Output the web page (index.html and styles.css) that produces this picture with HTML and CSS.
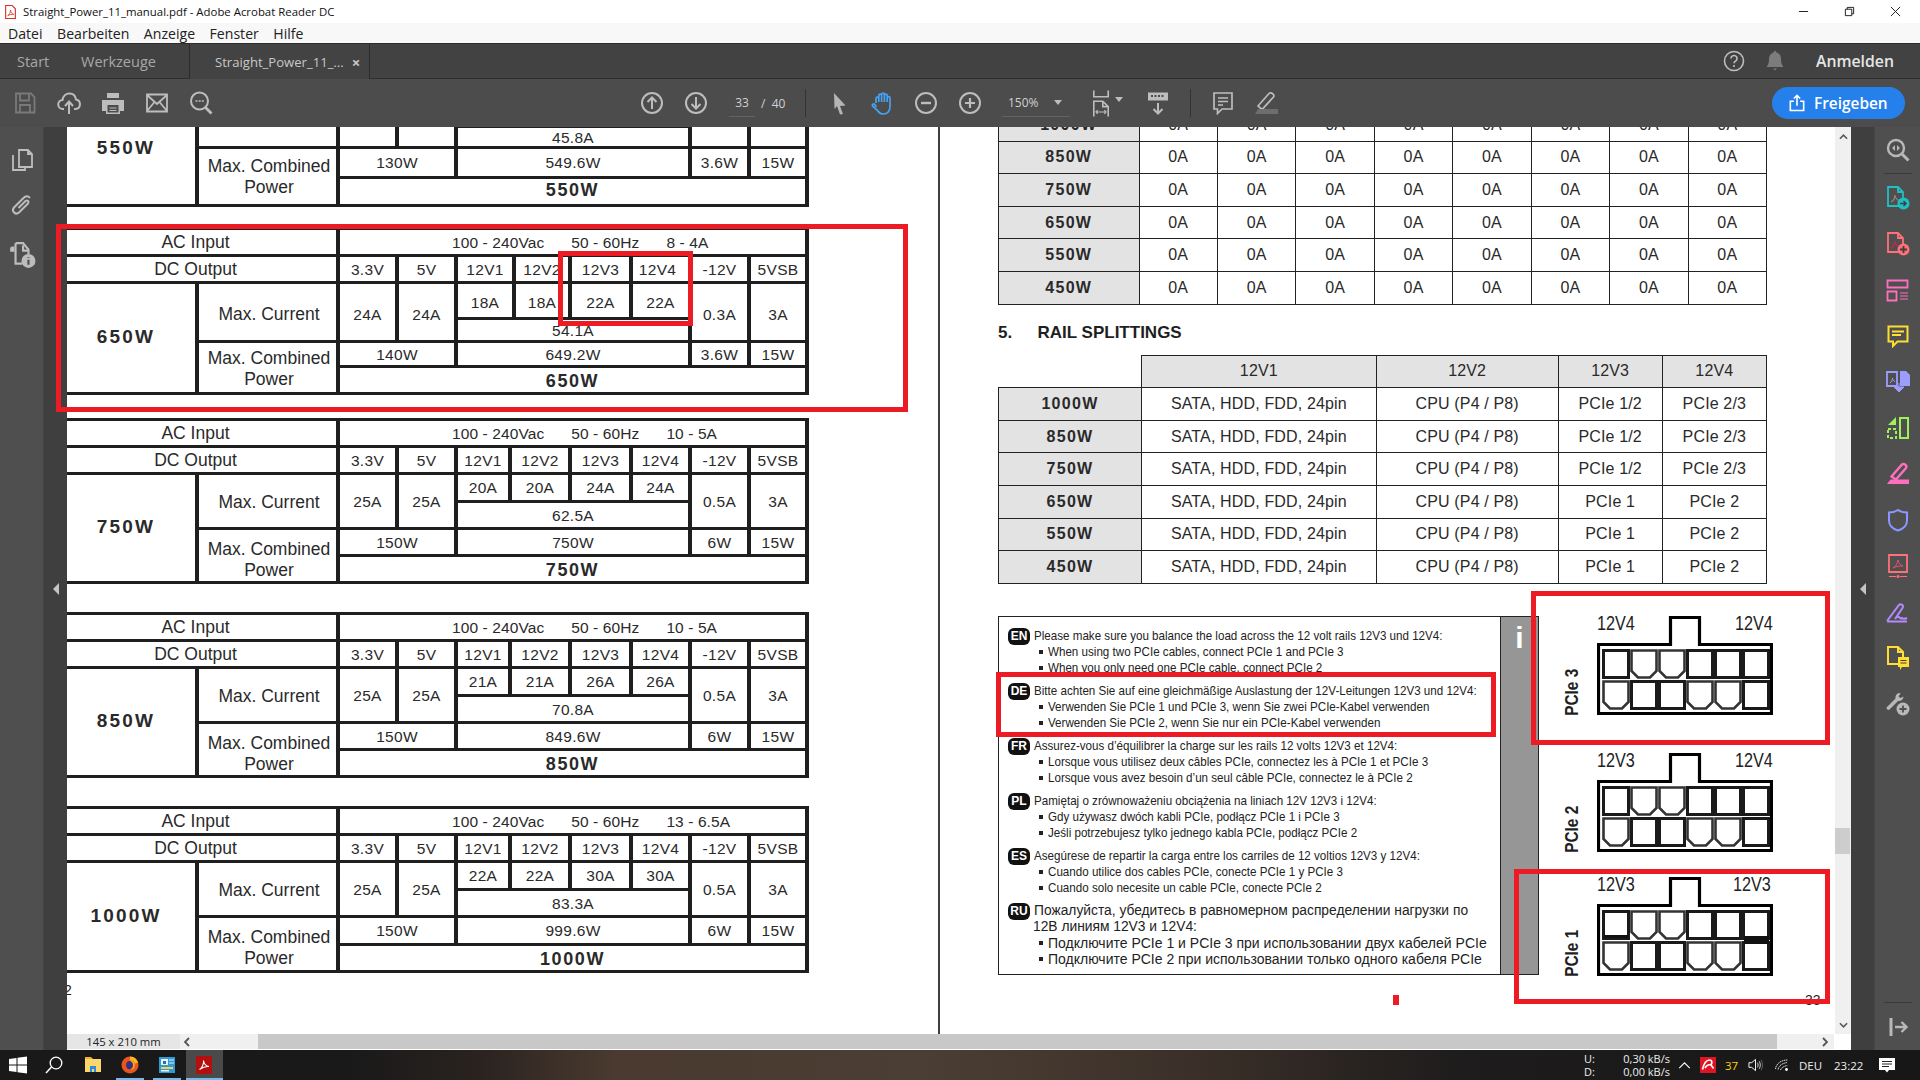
FILE: index.html
```html
<!DOCTYPE html>
<html lang="de">
<head>
<meta charset="utf-8">
<title>Straight_Power_11_manual.pdf - Adobe Acrobat Reader DC</title>
<link rel="stylesheet" href="styles.css">
</head>
<body>
<svg class="defs" width="0" height="0">
  <symbol id="cell-sq" viewBox="0 0 28 30"><rect x="1.5" y="1.5" width="25" height="27" fill="#fff" stroke="#1a1a1a" stroke-width="3"/></symbol>
  <symbol id="cell-ch" viewBox="0 0 28 30"><path d="M1.5 1.5H26.5V22L20 28.5H8L1.5 22Z" fill="#fff" stroke="#333" stroke-width="2.6"/></symbol>
  <symbol id="connector" viewBox="0 0 176 99">
    <path d="M1.5 28.5H73.5V1.5H102.5V28.5H174.5V97.5H1.5Z" fill="#fff" stroke="#000" stroke-width="3.2"/>
    <use href="#cell-sq" x="5" y="33" width="28" height="30"/><use href="#cell-ch" x="33" y="33" width="28" height="30"/><use href="#cell-ch" x="61" y="33" width="28" height="30"/><use href="#cell-sq" x="89" y="33" width="28" height="30"/><use href="#cell-sq" x="117" y="33" width="28" height="30"/><use href="#cell-sq" x="145" y="33" width="28" height="30"/>
    <use href="#cell-ch" x="5" y="64" width="28" height="30"/><use href="#cell-sq" x="33" y="64" width="28" height="30"/><use href="#cell-sq" x="61" y="64" width="28" height="30"/><use href="#cell-ch" x="89" y="64" width="28" height="30"/><use href="#cell-ch" x="117" y="64" width="28" height="30"/><use href="#cell-sq" x="145" y="64" width="28" height="30"/>
  </symbol>
</svg>

<header class="titlebar">
  <svg class="title-icon" viewBox="0 0 16 18"><path d="M2 1h8l4 4v12H2Z" fill="#fff" stroke="#d9342b" stroke-width="1.4"/><path d="M4.5 13.5c2-1 3.500-4 3.500-7 .5 3 2 5 4 5.500-2.500-.3-5.500.3-7.500 1.500Z" fill="none" stroke="#d9342b"/></svg>
  <span class="title-text">Straight_Power_11_manual.pdf - Adobe Acrobat Reader DC</span>
  <div class="win-btns">
    <span class="win-btn"><svg viewBox="0 0 12 12"><path d="M1 6h10" stroke="#111" fill="none"/></svg></span>
    <span class="win-btn"><svg viewBox="0 0 12 12"><path d="M1.500 3.500h7v7h-7ZM3.500 3.500v-2h7v7h-2" stroke="#111" fill="none"/></svg></span>
    <span class="win-btn"><svg viewBox="0 0 12 12"><path d="M1 1l10 10M11 1L1 11" stroke="#111" fill="none"/></svg></span>
  </div>
</header>

<nav class="menubar"><span>Datei</span><span>Bearbeiten</span><span>Anzeige</span><span>Fenster</span><span>Hilfe</span></nav>

<div class="tabbar">
  <span class="tab tab-start">Start</span>
  <span class="tab tab-tools">Werkzeuge</span>
  <div class="tab-active"><span>Straight_Power_11_...</span><b class="tab-close">×</b></div>
  <div class="tab-right">
    <svg class="ic22" viewBox="0 0 22 22"><circle cx="11" cy="11" r="9.500" fill="none" stroke="#bdbdbd" stroke-width="1.600"/><path d="M8 8.500a3 3 0 1 1 4.500 2.600c-1 .6-1.500 1-1.500 2.200" fill="none" stroke="#bdbdbd" stroke-width="1.600"/><circle cx="11" cy="16" r="1.100" fill="#bdbdbd"/></svg>
    <svg class="ic22 bell" viewBox="0 0 22 22"><path d="M11 1c1 0 1.500.7 1.500 1.500C15.500 3.300 17 6 17 9c0 4 1 6 2.500 8h-17C4 15 5 13 5 9c0-3 1.500-5.700 4.500-6.500C9.500 1.700 10 1 11 1Z" fill="#7c7c7c"/><path d="M9 18.500h4l-2 2Z" fill="#7c7c7c"/></svg>
    <span class="signin">Anmelden</span>
  </div>
</div>

<div class="toolbar">
  <div class="tb-group">
    <svg class="tb" viewBox="0 0 24 24"><path d="M3 2.500h15l3.500 3.500v15.500h-18.500Z M7 2.500v7h9v-7 M7 21.500v-7.500h10v7.500" fill="none" stroke="#7a7a7a" stroke-width="1.800"/></svg>
    <svg class="tb" viewBox="0 0 24 24"><path d="M7 18H6a4.500 4.500 0 0 1-.5-9C6 5 9 2.500 12.500 2.500c3.500 0 6 2.500 6.500 6a4.800 4.800 0 0 1-.5 9.500H17M12 23V11M8 15l4-4.500 4 4.500" fill="none" stroke="#bdbdbd" stroke-width="2"/></svg>
    <svg class="tb" viewBox="0 0 24 24"><path d="M6 7V2h12v5ZM1 9h22v11h-4v3H5v-3H1Z" fill="#bdbdbd"/><path d="M6.500 14h11v7.500h-11Z" fill="#4c4c4c"/><path d="M8.500 17h7M8.500 19.500h7" stroke="#bdbdbd" stroke-width="1.200"/></svg>
    <svg class="tb" viewBox="0 0 24 24"><path d="M2 3.500h20v17H2ZM2 4l10 9 10-9M2 20l7.500-9M22 20l-7.500-9" fill="none" stroke="#bdbdbd" stroke-width="1.800"/></svg>
    <svg class="tb" viewBox="0 0 24 24"><circle cx="10.500" cy="10" r="8.500" fill="none" stroke="#bdbdbd" stroke-width="2"/><path d="M16.500 16.500l6 6" stroke="#bdbdbd" stroke-width="2.800"/><path d="M6.500 10h2M9.700 10h2M12.800 10h2" stroke="#bdbdbd" stroke-width="1.500"/></svg>
  </div>
  <div class="tb-group tb-nav">
    <svg class="tb" viewBox="0 0 24 24"><circle cx="12" cy="12" r="10" fill="none" stroke="#bdbdbd" stroke-width="2"/><path d="M12 18V6.500M7.500 11 12 6.500 16.500 11" fill="none" stroke="#bdbdbd" stroke-width="2"/></svg>
    <svg class="tb" viewBox="0 0 24 24"><circle cx="12" cy="12" r="10" fill="none" stroke="#bdbdbd" stroke-width="2"/><path d="M12 6v11.500M7.500 13l4.500 4.500 4.500-4.500" fill="none" stroke="#bdbdbd" stroke-width="2"/></svg>
  </div>
  <span class="tb-page">33</span>
  <span class="tb-total">/&nbsp; 40</span>
  <i class="tb-sep"></i>
  <div class="tb-group tb-tools">
    <svg class="tb" viewBox="-2 0 24 24"><path d="M6 2l11.500 12.500-5.500.5 3 8-3 .5-3-8.500-2.500 3Z" fill="#b5b5b5"/></svg>
    <svg class="tb" viewBox="-1 0 24 24"><path d="M5 12V7.500a1.400 1.400 0 0 1 2.800 0V11 4.500a1.400 1.400 0 0 1 2.800 0V11 3.500a1.400 1.400 0 0 1 2.800 0V11 4.500a1.400 1.400 0 0 1 2.800 0V11 7a1.400 1.400 0 0 1 2.800 0v8.500c0 4.500-2.500 7.500-6.500 7.500-3 0-4.500-1-6-3.500L1.500 15c-.8-1.300 1.200-2.800 2.200-1.500L5.500 16" fill="none" stroke="#46a2f2" stroke-width="1.700"/></svg>
    <svg class="tb" viewBox="0 0 24 24"><circle cx="12" cy="12" r="10" fill="none" stroke="#bdbdbd" stroke-width="2"/><path d="M7 12h10" stroke="#bdbdbd" stroke-width="2.400"/></svg>
    <svg class="tb" viewBox="0 0 24 24"><circle cx="12" cy="12" r="10" fill="none" stroke="#bdbdbd" stroke-width="2"/><path d="M7 12h10M12 7v10" stroke="#bdbdbd" stroke-width="2.200"/></svg>
  </div>
  <div class="tb-zoom"><span>150%</span><i class="caret"></i></div>
  <svg class="tb-fit" viewBox="0 0 20 30"><path d="M2 1v7h16V1M2 30V13h10l6 6v11M12 13v6h6" fill="none" stroke="#bdbdbd" stroke-width="1.800"/><path d="M4 25h12M4 25l2.500-2M4 25l2.500 2M16 25l-2.500-2M16 25l-2.500 2" fill="none" stroke="#bdbdbd" stroke-width="1.200"/></svg>
  <i class="caret caret-fit"></i>
  <svg class="tb tb-ruler" viewBox="0 0 24 24"><path d="M2 1.500h20v8H2Z" fill="#bdbdbd"/><path d="M5 5h2M8.500 5h2M12 5h2M15.500 5h2" stroke="#4c4c4c" stroke-width="2"/><path d="M12 12v10M7.500 18l4.500 4.500 4.500-4.500" fill="none" stroke="#bdbdbd" stroke-width="2"/></svg>
  <i class="tb-sep tb-sep2"></i>
  <svg class="tb tb-comment" viewBox="0 0 24 24"><path d="M3 2h18v16h-10l-4.500 4.500V18H3Z M7 7h10M7 10.500h10M7 14h5" fill="none" stroke="#bdbdbd" stroke-width="1.700"/></svg>
  <svg class="tb tb-pen" viewBox="0 0 24 24"><path d="M4 15 15 2.500c2-2 6 1 4.500 3.500L8 18.500Z" fill="none" stroke="#bdbdbd" stroke-width="1.700"/><path d="M1 23l3-5h20v5Z" fill="#6e6e6e"/></svg>
  <button class="share">
    <svg viewBox="0 0 18 20" class="share-ic"><path d="M5.500 8H1.500v10.500h15V8h-4M9 13V2M5.500 5 9 1.500 12.500 5" fill="none" stroke="#fff" stroke-width="1.800"/></svg>
    <span>Freigeben</span>
  </button>
</div>

<main class="main">
  <aside class="rail-left">
    <svg class="rail-ic" viewBox="0 0 24 24"><path d="M9 2h9l4 4v13H9Z M18 2v4h4M3 7v15h12v-3" fill="none" stroke="#bdbdbd" stroke-width="1.800"/></svg>
    <svg class="rail-ic" viewBox="0 0 24 24"><path d="M20 5c-2-2.500-4.500-2-6.500 0L4 14.500c-3 3.500 1.500 8 5 5l9-9c1.500-2-.5-4-2.500-2.500l-7 7" fill="none" stroke="#bdbdbd" stroke-width="2"/></svg>
    <svg class="rail-ic rail-info" viewBox="0 0 26 24"><path d="M2 6a2 2 0 0 1 2-2h2v5H2Z" fill="#bdbdbd"/><path d="M7 1h7l5 6v4M7 1v19h6" fill="none" stroke="#bdbdbd" stroke-width="2"/><path d="M14 3v5h5" fill="none" stroke="#bdbdbd" stroke-width="2"/><circle cx="19" cy="17.500" r="6.500" fill="#bdbdbd"/><path d="M19 14v.8M19 16.500v4.500" stroke="#4f4f4f" stroke-width="2"/></svg>
  </aside>
  <div class="gutter"><i class="arrow-left"></i></div>

  <div class="viewer">
    <div class="viewer-top">
      <section class="page page-left">
        <div class="spec spec-550">
          <div class="watt">550W</div><div class="lab r2">Max. Current</div><div class="r2">24A</div><div class="r2">24A</div><div>18A</div><div>18A</div><div>18A</div><div>18A</div><div class="r2">0.3A</div><div class="r2">3A</div>
          <div class="s4">45.8A</div>
          <div class="lab cb r2">Max. Combined Power</div><div class="s2">130W</div><div class="s4">549.6W</div><div>3.6W</div><div>15W</div>
          <div class="tot">550W</div>
        </div>

        <div class="spec spec-650">
          <div class="ac">AC Input</div><div class="acv"><span>100 - 240Vac</span><span>50 - 60Hz</span><span>8 - 4A</span></div>
          <div class="ac">DC Output</div><div>3.3V</div><div>5V</div><div>12V1</div><div>12V2</div><div>12V3</div><div class="off">12V4</div><div>-12V</div><div>5VSB</div>
          <div class="watt">650W</div><div class="lab r2">Max. Current</div><div class="r2">24A</div><div class="r2">24A</div><div class="v">18A</div><div class="v">18A</div><div class="v">22A</div><div class="v">22A</div><div class="r2">0.3A</div><div class="r2">3A</div>
          <div class="s4">54.1A</div>
          <div class="lab cb r2">Max. Combined Power</div><div class="s2">140W</div><div class="s4">649.2W</div><div>3.6W</div><div>15W</div>
          <div class="tot">650W</div>
        </div>

        <div class="spec spec-std">
          <div class="ac">AC Input</div><div class="acv"><span>100 - 240Vac</span><span>50 - 60Hz</span><span>10 - 5A</span></div>
          <div class="ac">DC Output</div><div>3.3V</div><div>5V</div><div>12V1</div><div>12V2</div><div>12V3</div><div>12V4</div><div>-12V</div><div>5VSB</div>
          <div class="watt">750W</div><div class="lab r2">Max. Current</div><div class="r2">25A</div><div class="r2">25A</div><div>20A</div><div>20A</div><div>24A</div><div>24A</div><div class="r2">0.5A</div><div class="r2">3A</div>
          <div class="s4">62.5A</div>
          <div class="lab cb r2">Max. Combined Power</div><div class="s2">150W</div><div class="s4">750W</div><div>6W</div><div>15W</div>
          <div class="tot">750W</div>
        </div>

        <div class="spec spec-std">
          <div class="ac">AC Input</div><div class="acv"><span>100 - 240Vac</span><span>50 - 60Hz</span><span>10 - 5A</span></div>
          <div class="ac">DC Output</div><div>3.3V</div><div>5V</div><div>12V1</div><div>12V2</div><div>12V3</div><div>12V4</div><div>-12V</div><div>5VSB</div>
          <div class="watt">850W</div><div class="lab r2">Max. Current</div><div class="r2">25A</div><div class="r2">25A</div><div>21A</div><div>21A</div><div>26A</div><div>26A</div><div class="r2">0.5A</div><div class="r2">3A</div>
          <div class="s4">70.8A</div>
          <div class="lab cb r2">Max. Combined Power</div><div class="s2">150W</div><div class="s4">849.6W</div><div>6W</div><div>15W</div>
          <div class="tot">850W</div>
        </div>

        <div class="spec spec-std spec-1000">
          <div class="ac">AC Input</div><div class="acv"><span>100 - 240Vac</span><span>50 - 60Hz</span><span>13 - 6.5A</span></div>
          <div class="ac">DC Output</div><div>3.3V</div><div>5V</div><div>12V1</div><div>12V2</div><div>12V3</div><div>12V4</div><div>-12V</div><div>5VSB</div>
          <div class="watt">1000W</div><div class="lab r2">Max. Current</div><div class="r2">25A</div><div class="r2">25A</div><div>22A</div><div>22A</div><div>30A</div><div>30A</div><div class="r2">0.5A</div><div class="r2">3A</div>
          <div class="s4">83.3A</div>
          <div class="lab cb r2">Max. Combined Power</div><div class="s2">150W</div><div class="s4">999.6W</div><div>6W</div><div>15W</div>
          <div class="tot">1000W</div>
        </div>
        <div class="pageno-left">2</div>
      </section>

      <i class="page-divider"></i>

      <section class="page page-right">
        <table class="rt rt-a">
          <tr><th>1000W</th><td>0A</td><td>0A</td><td>0A</td><td>0A</td><td>0A</td><td>0A</td><td>0A</td><td>0A</td></tr>
          <tr><th>850W</th><td>0A</td><td>0A</td><td>0A</td><td>0A</td><td>0A</td><td>0A</td><td>0A</td><td>0A</td></tr>
          <tr><th>750W</th><td>0A</td><td>0A</td><td>0A</td><td>0A</td><td>0A</td><td>0A</td><td>0A</td><td>0A</td></tr>
          <tr><th>650W</th><td>0A</td><td>0A</td><td>0A</td><td>0A</td><td>0A</td><td>0A</td><td>0A</td><td>0A</td></tr>
          <tr><th>550W</th><td>0A</td><td>0A</td><td>0A</td><td>0A</td><td>0A</td><td>0A</td><td>0A</td><td>0A</td></tr>
          <tr><th>450W</th><td>0A</td><td>0A</td><td>0A</td><td>0A</td><td>0A</td><td>0A</td><td>0A</td><td>0A</td></tr>
        </table>

        <h2 class="section"><span>5.</span>RAIL SPLITTINGS</h2>

        <table class="rt rt-b">
          <tr class="rt-head"><td class="blank"></td><td>12V1</td><td>12V2</td><td>12V3</td><td>12V4</td></tr>
          <tr><th>1000W</th><td>SATA, HDD, FDD, 24pin</td><td>CPU (P4 / P8)</td><td>PCIe 1/2</td><td>PCIe 2/3</td></tr>
          <tr><th>850W</th><td>SATA, HDD, FDD, 24pin</td><td>CPU (P4 / P8)</td><td>PCIe 1/2</td><td>PCIe 2/3</td></tr>
          <tr><th>750W</th><td>SATA, HDD, FDD, 24pin</td><td>CPU (P4 / P8)</td><td>PCIe 1/2</td><td>PCIe 2/3</td></tr>
          <tr><th>650W</th><td>SATA, HDD, FDD, 24pin</td><td>CPU (P4 / P8)</td><td>PCIe 1</td><td>PCIe 2</td></tr>
          <tr><th>550W</th><td>SATA, HDD, FDD, 24pin</td><td>CPU (P4 / P8)</td><td>PCIe 1</td><td>PCIe 2</td></tr>
          <tr><th>450W</th><td>SATA, HDD, FDD, 24pin</td><td>CPU (P4 / P8)</td><td>PCIe 1</td><td>PCIe 2</td></tr>
        </table>

        <div class="lower">
          <div class="notes">
            <div class="note"><p class="nh"><b class="lang">EN</b><span class="cx">Please make sure you balance the load across the 12 volt rails 12V3 und 12V4:</span></p><p class="ni"><span class="cx">When using two PCIe cables, connect PCIe 1 and PCIe 3</span></p><p class="ni"><span class="cx">When you only need one PCIe cable, connect PCIe 2</span></p></div>
            <div class="note"><p class="nh"><b class="lang">DE</b><span class="cx">Bitte achten Sie auf eine gleichmäßige Auslastung der 12V-Leitungen 12V3 und 12V4:</span></p><p class="ni"><span class="cx">Verwenden Sie PCIe 1 und PCIe 3, wenn Sie zwei PCIe-Kabel verwenden</span></p><p class="ni"><span class="cx">Verwenden Sie PCIe 2, wenn Sie nur ein PCIe-Kabel verwenden</span></p></div>
            <div class="note"><p class="nh"><b class="lang">FR</b><span class="cx">Assurez-vous d’équilibrer la charge sur les rails 12 volts 12V3 et 12V4:</span></p><p class="ni"><span class="cx">Lorsque vous utilisez deux câbles PCIe, connectez les à PCIe 1 et PCIe 3</span></p><p class="ni"><span class="cx">Lorsque vous avez besoin d’un seul câble PCIe, connectez le à PCIe 2</span></p></div>
            <div class="note"><p class="nh"><b class="lang">PL</b><span class="cx">Pamiętaj o zrównoważeniu obciążenia na liniach 12V 12V3 i 12V4:</span></p><p class="ni"><span class="cx">Gdy używasz dwóch kabli PCIe, podłącz PCIe 1 i PCIe 3</span></p><p class="ni"><span class="cx">Jeśli potrzebujesz tylko jednego kabla PCIe, podłącz PCIe 2</span></p></div>
            <div class="note"><p class="nh"><b class="lang">ES</b><span class="cx">Asegúrese de repartir la carga entre los carriles de 12 voltios 12V3 y 12V4:</span></p><p class="ni"><span class="cx">Cuando utilice dos cables PCIe, conecte PCIe 1 y PCIe 3</span></p><p class="ni"><span class="cx">Cuando solo necesite un cable PCIe, conecte PCIe 2</span></p></div>
            <div class="note note-ru"><p class="nh"><b class="lang">RU</b>Пожалуйста, убедитесь в равномерном распределении нагрузки по</p><p class="nh2">12В линиям 12V3 и 12V4:</p><p class="ni">Подключите PCIe 1 и PCIe 3 при использовании двух кабелей PCIe</p><p class="ni">Подключите PCIe 2 при использовании только одного кабеля PCIe</p></div>
          </div>
          <div class="strip">i</div>
          <div class="connectors">
            <div class="conn conn-3"><span class="conn-name">PCIe 3</span><div class="conn-body"><svg class="conn-svg" viewBox="0 0 176 99"><use href="#connector"/></svg><div class="conn-labels"><span>12V4</span><span>12V4</span></div></div></div>
            <div class="conn conn-2"><span class="conn-name">PCIe 2</span><div class="conn-body"><svg class="conn-svg" viewBox="0 0 176 99"><use href="#connector"/></svg><div class="conn-labels"><span>12V3</span><span>12V4</span></div></div></div>
            <div class="conn conn-1"><span class="conn-name">PCIe 1</span><div class="conn-body"><svg class="conn-svg" viewBox="0 0 176 99"><use href="#connector"/><path d="M147 59h25v8h-25ZM7 58h24v3H7Z" fill="#111"/></svg><div class="conn-labels"><span>12V3</span><span class="lab-in">12V3</span></div></div></div>
          </div>
        </div>
        <div class="pageno-right">33</div>
      </section>

      <div class="vscroll">
        <svg class="sb-arrow" viewBox="0 0 10 6"><path d="M1 5l4-4 4 4" fill="none" stroke="#5a5a5a" stroke-width="1.800"/></svg>
        <i class="vthumb"></i>
        <svg class="sb-arrow" viewBox="0 0 10 6"><path d="M1 1l4 4 4-4" fill="none" stroke="#5a5a5a" stroke-width="1.800"/></svg>
      </div>
    </div>
    <div class="hscroll">
      <span class="pagesize">145 x 210 mm</span>
      <span class="h-left"><svg viewBox="0 0 6 10"><path d="M5 1 1 5l4 4" fill="none" stroke="#555" stroke-width="1.800"/></svg></span>
      <i class="hthumb"></i>
      <span class="h-right"><svg viewBox="0 0 6 10"><path d="M1 1l4 4-4 4" fill="none" stroke="#555" stroke-width="1.800"/></svg></span>
      <i class="h-corner"></i>
    </div>
  </div>

  <div class="gutter"><i class="arrow-left"></i></div>
  <aside class="rail-right">
    <svg class="rr" viewBox="0 0 24 24"><circle cx="10" cy="10" r="8" fill="none" stroke="#b8b8b8" stroke-width="2.400"/><path d="M16 16l6.500 6.500" stroke="#b8b8b8" stroke-width="3"/><path d="M9 7 6 10l3 3ZM11 7l3 3-3 3Z" fill="#b8b8b8"/></svg>
    <i class="rr-sep"></i>
    <div class="rr-list">
      <svg class="rr" viewBox="0 0 24 24"><path d="M13 20H2V1h10l5 5v6M12 1v5h5" fill="none" stroke="#1fc0c4" stroke-width="1.800"/><path d="M5 16c2-1 4-4 4-7 .5 3 2 5 4 5.500" fill="none" stroke="#8a8a8a" stroke-width="1.200"/><circle cx="17.500" cy="17.500" r="6" fill="#1fc0c4"/><path d="M14 17.500h6M17.500 15l2.500 2.500-2.500 2.500" fill="none" stroke="#3f3f3f" stroke-width="1.500"/></svg>
      <svg class="rr" viewBox="0 0 24 24"><path d="M13 20H2V1h10l5 5v6M12 1v5h5" fill="none" stroke="#ff7079" stroke-width="1.800"/><path d="M5 16c2-1 4-4 4-7 .5 3 2 5 4 5.500" fill="none" stroke="#c25" stroke-width="1.200"/><circle cx="17.500" cy="17.500" r="6" fill="#ff7079"/><path d="M14 17.500h7M17.500 14v7" stroke="#3f3f3f" stroke-width="1.800"/></svg>
      <svg class="rr" viewBox="0 0 24 24"><path d="M1.500 2.500h20v7h-20ZM1.500 13.500h9v9h-9Z" fill="none" stroke="#ff6fbf" stroke-width="1.800"/><path d="M14 15h8M14 18h8M14 21h8" stroke="#ff6fbf" stroke-width="1.200"/></svg>
      <svg class="rr" viewBox="0 0 24 24"><path d="M2.500 2.500h19v15H11.500l-4.500 4.500v-4.500h-4.500Z" fill="none" stroke="#ffdd33" stroke-width="2"/><path d="M6 7.500h12M6 11h9" stroke="#ffdd33" stroke-width="1.800"/></svg>
      <svg class="rr" viewBox="0 0 24 24"><path d="M1 2h10v14H1Z" fill="none" stroke="#9d9dff" stroke-width="1.800"/><path d="M14 1h6l4 4v11H14Z" fill="#9d9dff"/><path d="M13 13v6M8 17l5 5 5-5Z" fill="#9d9dff" stroke="#9d9dff"/><path d="M4 13c1.500-1 2.500-3 2.500-5 .3 2 1 3 2.500 3.500" fill="none" stroke="#9d9dff"/></svg>
      <svg class="rr" viewBox="0 0 24 24"><path d="M14 2h8v20h-8Z" fill="none" stroke="#9ff05a" stroke-width="2"/><path d="M2 13h8v9H2Z" fill="none" stroke="#9ff05a" stroke-width="2" stroke-dasharray="3 2"/><path d="M10 1v8H2Z" fill="#9ff05a"/></svg>
      <svg class="rr" viewBox="0 0 24 24"><path d="M5.500 14.500 16 2.500c2-1.500 5.500 1 4 3.500L10 17.500Z" fill="none" stroke="#ff6fbf" stroke-width="2.400"/><path d="M1 22l3.500-4.500H23V22Z" fill="#ff6fbf"/></svg>
      <svg class="rr" viewBox="0 0 24 24"><path d="M12 2c2.500 1.800 5.500 2.500 9 2.500v8c0 5-4 8.500-9 10-5-1.500-9-5-9-10v-8c3.500 0 6.500-.7 9-2.500Z" fill="none" stroke="#8a97ff" stroke-width="2"/></svg>
      <svg class="rr" viewBox="0 0 24 24"><path d="M3 1h18v17H3Z" fill="none" stroke="#ff7079" stroke-width="1.800"/><path d="M7 14c2-1 4.500-4 5-8 .5 3 2.500 5.500 5 6-3-.5-7 .5-10 2Z" fill="none" stroke="#e8506a"/><path d="M3 22.500h7M14 22.500h7" stroke="#ff7079"/><circle cx="12" cy="22.500" r="1.500" fill="#ff7079"/></svg>
      <svg class="rr" viewBox="0 0 24 24"><path d="M1 21 13 5c2-2 5 .5 3.500 3L9 19c1.500-2 3.500-3 4.500-1.500.5 1 1.500 1 2.500.5.5 1 2.500 1.300 5 0M1 21.500h20" fill="none" stroke="#b38aff" stroke-width="2"/></svg>
      <svg class="rr" viewBox="0 0 24 24"><path d="M12 18H2V1h10l5 5v6M12 1v5h5" fill="none" stroke="#ffdd33" stroke-width="2"/><path d="M12 11h11v10h-7l-2 3v-3h-2Z" fill="#ffdd33"/><path d="M14.500 14.500h6M14.500 17h6" stroke="#3f3f3f"/></svg>
      <svg class="rr" viewBox="0 0 24 24"><path d="M14 1c-3 0-5 2.500-4.500 5.500L1 15c-1.500 1.500 1 4 2.500 2.500L12 9c3 .5 5.500-1.500 5.500-4.500l-3 1.500-2-1.500 2-3Z" fill="#b8b8b8"/><circle cx="17" cy="17" r="6.500" fill="#b8b8b8"/><path d="M13.500 17h7M17 13.500v7" stroke="#4f4f4f" stroke-width="1.800"/></svg>
    </div>
    <i class="rr-sep rr-sep-bottom"></i>
    <svg class="rr rr-collapse" viewBox="0 0 24 24"><path d="M5 3v18" stroke="#b8b8b8" stroke-width="3"/><path d="M9 12h11M15.500 7l5 5-5 5" fill="none" stroke="#b8b8b8" stroke-width="2.400"/></svg>
  </aside>

  <i class="mark mark-650"></i>
  <i class="mark mark-rails"></i>
  <i class="mark mark-de"></i>
  <i class="mark mark-p3"></i>
  <i class="mark mark-p1"></i>
  <i class="mark-dot"></i>
</main>

<footer class="taskbar">
  <span class="tk-item tk-start"><svg viewBox="0 0 18 18"><path d="M0 3l7.500-1v6.500H0ZM8.500 1.800 18 .5v8H8.500ZM0 9.500h7.500V16L0 15ZM8.500 9.500H18v8l-9.500-1.300Z" fill="#fff"/></svg></span>
  <span class="tk-item"><svg viewBox="0 0 18 18"><circle cx="11" cy="7" r="5.800" fill="none" stroke="#fff" stroke-width="1.300"/><path d="M6.500 11 1 17" stroke="#fff" stroke-width="1.500"/></svg></span>
  <span class="tk-item tk-first"><svg viewBox="0 0 18 18"><path d="M1 1h6l2 2h-8Z" fill="#f1b32c"/><path d="M1 3h16v13H1Z" fill="#fbd66a"/><path d="M6 10h6v6H10v-3H8v3H6Z" fill="#2b8be0"/></svg></span>
  <span class="tk-item tk-on"><svg viewBox="0 0 18 18"><circle cx="9" cy="9" r="8.500" fill="#e8561e"/><path d="M9 .5a8.500 8.500 0 0 1 8 6L13 8c-.5-1-1-2-4-2Z" fill="#ffb41f"/><circle cx="9.500" cy="9" r="4.500" fill="#37307e"/><path d="M6 5c3-1 6 1 6 4s-2 4-3 5c3 0 5-2 5-5s-3-6-8-4Z" fill="#fba11a"/></svg></span>
  <span class="tk-item tk-on"><svg viewBox="0 0 18 18"><path d="M1 1h16v16H1Z" fill="#2e9ad6"/><path d="M3 3h7v6H3Z" fill="#e6f3fb"/><path d="M5 5h3v3H5Z" fill="#2a6db0"/><path d="M11 4h5M11 7h5" stroke="#d8eefa"/><path d="M3 11h12v2H3Z" fill="#f5d44b"/><path d="M3 14h8v1.500H3Z" fill="#e6f3fb"/></svg></span>
  <span class="tk-item tk-active"><svg viewBox="0 0 18 18"><path d="M1 0h16v18H1Z" fill="#b40f0f"/><path d="M4.500 13.500C7 12 9 8 8.500 4.500c.5 3.500 2.500 5.500 5.500 6-3-.3-6.500.8-9.500 3Z" fill="none" stroke="#fff" stroke-width="1.100"/></svg></span>
  <div class="tray">
    <div class="net"><div class="net-row"><span>U:</span><span>0,30 kB/s</span></div><div class="net-row"><span>D:</span><span>0,00 kB/s</span></div></div>
    <svg class="tray-chev" viewBox="0 0 14 8"><path d="M1 7l6-6 6 6" fill="none" stroke="#fff" stroke-width="1.300"/></svg>
    <svg class="tray-avira" viewBox="0 0 16 16"><path d="M0 0h16v16H0Z" fill="#e01422"/><path d="M2.500 12.500C4 6 7 3 9.500 3c2.500 0 3 2 1.500 5l2.500 3.500M5 11c1-2 3-3.500 6-3.500" fill="none" stroke="#fff" stroke-width="1.700"/></svg>
    <span class="tray-37">37</span>
    <svg class="tray-sound" viewBox="0 0 16 14"><path d="M1 4.500h3L8 1v12L4 9.500H1Z" fill="none" stroke="#fff"/><path d="M10 4.500c1 1.500 1 3.500 0 5M12 3c1.500 2.500 1.500 5.500 0 8" fill="none" stroke="#ddd"/><path d="M14 1.500c2 3.500 2 7.500 0 11" fill="none" stroke="#666"/></svg>
    <svg class="tray-wifi" viewBox="0 0 13 12"><path d="M.5 10C1 5 6 1 12.500 1M3 10.500C3.500 7 7.500 4 12.500 3.500M5.500 11c.5-2 3.500-4 7-4.500" fill="none" stroke="#e0e0e0" stroke-dasharray="1.500 .6"/><circle cx="11.500" cy="10.500" r="1.400" fill="#fff"/></svg>
    <span class="tray-lang">DEU</span>
    <span class="tray-time">23:22</span>
    <svg class="tray-note" viewBox="0 0 16 16"><path d="M0 1h16v12H10L8 15.500 6 13H0Z" fill="#fff"/><path d="M3 4.500h10M3 7h10M3 9.500h7" stroke="#222"/></svg>
  </div>
</footer>
</body>
</html>
```
FILE: styles.css
```css
* { box-sizing: border-box; }
html, body { margin: 0; padding: 0; }
body {
  width: 1920px; height: 1080px; overflow: hidden;
  display: flex; flex-direction: column;
  font-family: "Open Sans", "Noto Sans", sans-serif;
  background: #3f3f3f;
}
.defs { position: absolute; }

/* title + menu */
.titlebar { height: 23px; background: #fff; display: flex; align-items: center; flex: none; }
.title-icon { width: 13px; height: 16px; margin-left: 4px; }
.title-text { margin-left: 6px; font-size: 11.400px; color: #111; }
.win-btns { margin-left: auto; display: flex; margin-right: 2px; }
.win-btn { width: 46px; height: 23px; display: flex; align-items: center; justify-content: center; }
.win-btn svg { width: 11px; height: 11px; }
.menubar { height: 20px; flex: none; background: #f8f8f8; display: flex; align-items: center; padding-left: 8px; gap: 14.500px; font-size: 14.100px; color: #222; }

/* tabs */
.tabbar { height: 36px; flex: none; background: #424242; border-top: 1px solid #2c2c2c; border-bottom: 1px solid #2e2e2e; display: flex; align-items: center; color: #a8a8a8; font-size: 14.500px; }
.tab { flex: none; white-space: nowrap; }
.tab-start { margin-left: 17px; width: 64px; }
.tab-tools { width: 108px; }
.tab-active { width: 181px; height: 35px; margin-bottom: -1px; background: #434343; border-left: 1px solid #2c2c2c; border-right: 1px solid #2c2c2c; display: flex; align-items: center; padding-left: 25px; color: #c8c8c8; font-size: 13.100px; white-space: nowrap; }
.tab-close { margin-left: 8px; color: #c8c8c8; font-size: 15px; }
.tab-right { margin-left: auto; display: flex; align-items: center; }
.ic22 { width: 22px; height: 22px; }
.bell { margin-left: 19px; }
.signin { margin-left: 30px; margin-right: 26px; font-size: 15.800px; font-weight: 600; color: #e6e6e6; }

/* toolbar */
.toolbar { height: 48px; flex: none; background: #4c4c4c; display: flex; align-items: center; color: #d0d0d0; font-size: 12px; }
.tb { width: 24px; height: 24px; flex: none; }
.tb-group { display: flex; gap: 20px; margin-left: 13px; }
.tb-nav { margin-left: 427px; }
.tb-page { margin-left: 21px; width: 26px; height: 28px; line-height: 28px; text-align: center; border-bottom: 1px solid #636363; }
.tb-total { margin-left: 6px; width: 32px; white-space: nowrap; }
.tb-sep { width: 1px; height: 28px; background: #333; margin-left: 12px; flex: none; }
.tb-tools { margin-left: 20px; }
.tb-zoom { margin-left: 20px; width: 68px; height: 28px; border-bottom: 1px solid #636363; display: flex; align-items: center; padding-left: 6px; gap: 15px; }
.caret { width: 0; height: 0; border-left: 4px solid transparent; border-right: 4px solid transparent; border-top: 5px solid #bdbdbd; flex: none; }
.tb-fit { width: 18px; height: 30px; margin-left: 22px; flex: none; }
.caret-fit { margin-left: 5px; margin-top: -8px; }
.tb-ruler { margin-left: 23px; }
.tb-sep2 { margin-left: 20px; }
.tb-comment { margin-left: 20px; }
.tb-pen { margin-left: 19px; }
.share { margin-left: auto; margin-right: 15px; width: 133px; height: 32px; border: 0; border-radius: 16px; background: #2680eb; color: #fff; display: flex; align-items: center; padding: 0 0 0 17px; font: 600 15.400px "Open Sans", sans-serif; gap: 9px; white-space: nowrap; }
.share-ic { width: 16px; height: 18px; flex: none; }

/* main */
.main { flex: 1; min-height: 0; display: flex; position: relative; }
.rail-left { width: 44px; flex: none; background: #4f4f4f; display: flex; flex-direction: column; align-items: center; padding-top: 21px; gap: 21px; border-right: 1px solid #444; }
.rail-ic { width: 24px; height: 24px; }
.rail-info { width: 28px; height: 26px; margin-top: 4px; }
.gutter { width: 23px; flex: none; background: #3f3f3f; display: flex; align-items: center; justify-content: center; }
.arrow-left { border-top: 6px solid transparent; border-bottom: 6px solid transparent; border-right: 6px solid #c4c4c4; }
.viewer { flex: 1; min-width: 0; display: flex; flex-direction: column; background: #fff; }
.viewer-top { flex: 1; min-height: 0; display: flex; }
.page { position: relative; background: #fff; overflow: hidden; flex: none; height: 907px; }
.page-left { width: 871px; }
.page-divider { width: 2px; background: #3f3f3f; flex: none; }
.page-right { width: 895px; padding-left: 58px; }

/* spec tables of the left page */
.spec {
  width: 742px; display: grid; gap: 3px 4px;
  grid-template-columns: 128px 137px 55px 55px 50px 56px 57px 55px 55px 54px;
  background: #1f1f1f; border: solid #1f1f1f; border-width: 3px 4px 3px 0;
  font-family: "Liberation Sans", sans-serif; font-size: 15.500px; letter-spacing: .3px; color: #2a2a2a;
}
.spec > div { background: #fff; display: flex; align-items: center; justify-content: center; text-align: center; line-height: 21px; }
.spec .ac { grid-column: span 2; font-size: 17.500px; letter-spacing: 0; padding-right: 12px; }
.spec .acv { grid-column: span 8; gap: 27px; letter-spacing: .1px; justify-content: flex-start; padding-left: 112px; }
.spec .watt { grid-row: span 4; font-weight: 700; font-size: 19px; letter-spacing: 2.200px; padding: 0 10px 3px 0; }
.spec .lab { font-size: 17.500px; letter-spacing: 0; padding: 2px 0 0 3px; }
.spec .r2 { grid-row: span 2; }
.spec .s2 { grid-column: span 2; }
.spec .s4 { grid-column: span 4; }
.spec .tot { grid-column: span 8; font-weight: 700; font-size: 18px; letter-spacing: 1.600px; padding-top: 3px; }
.spec-550 { grid-template-rows: 31px 18px 27px 25px; margin-top: -36px; grid-template-columns: 128px 137px 55px 55px 54px 52px 57px 55px 55px 54px; }
.spec-550 .tot { padding: 0 0 3px; }
.spec-550 .lab { padding-top: 1px; }
.spec-650 { grid-template-rows: 24px 24px 33px 20px 22px 24px; margin-top: 20px; grid-template-columns: 128px 137px 55px 55px 54px 52px 57px 55px 55px 54px; }
.spec-650 > .r2 { padding-top: 5px; }
.spec-650 > .v { padding-top: 4px; }
.spec-650 > .off { padding-right: 6px; }
.spec-650 > .cb { padding-top: 3px; }
.spec-std { grid-template-rows: 24px 24px 25px 24px 24px 24px; margin-top: 23px; }
.spec-std + .spec-std { margin-top: 28px; }
.spec-std > .cb { padding-top: 8px; }
.spec-1000 { grid-template-rows: 24px 24px 25px 24px 25px 24px; }
.spec-650 > :nth-child(n+3):nth-child(-n+11), .spec-std > :nth-child(n+3):nth-child(-n+11) { padding-top: 1px; }
.pageno-left { font: 14px "Liberation Sans", sans-serif; color: #222; margin-top: 9px; margin-left: -3px; }

/* annotation frames drawn over the PDF */
.mark { position: absolute; border: 5px solid #ed1c24; display: block; pointer-events: none; z-index: 2; }
.mark-650 { left: 56px; top: 97px; width: 852px; height: 188px; }
.mark-rails { left: 558px; top: 124px; width: 135px; height: 75px; }
.mark-de { left: 996px; top: 545px; width: 500px; height: 65px; }
.mark-p3 { left: 1531px; top: 464px; width: 299px; height: 154px; }
.mark-p1 { left: 1514px; top: 742px; width: 316px; height: 135px; }
.mark-dot { position: absolute; left: 1393px; top: 868px; width: 6px; height: 10px; background: #ed1c24; z-index: 2; }

/* right page tables */
.rt { border-collapse: collapse; table-layout: fixed; font-family: "Liberation Sans", sans-serif; color: #2a2a2a; font-size: 16px; letter-spacing: .15px; width: 769px; }
.rt th, .rt td { border: 1px solid #222; text-align: center; padding: 0; font-weight: 400; }
.rt th { background: #e3e3e3; font-weight: 700; letter-spacing: 1.300px; }
.rt tr { height: 32.600px; }
.rt-a { margin-top: -19px; }
.rt-a th { width: 140.500px; }
.rt-b { margin-top: 13px; }
.rt-b .rt-head td:nth-child(1) { width: 143px; }
.rt-b .rt-head td:nth-child(2) { width: 234.700px; }
.rt-b .rt-head td:nth-child(3) { width: 182px; }
.rt-b .rt-head td:nth-child(4) { width: 104px; }
.rt-head td { background: #e3e3e3; }
.rt .rt-head .blank { background: #fff; border-top-color: #fff; border-left-color: #fff; }
.section { margin: 19px 0 0; font: 700 17px/18px "Liberation Sans", sans-serif; color: #1f1f1f; }
.section span { display: inline-block; width: 39.500px; }

/* notes */
.lower { display: flex; margin-top: 32px; }
.notes { width: 503px; height: 359px; border: 1px solid #222; padding: 11px 0 0 9px; font-family: "Liberation Sans", sans-serif; font-size: 13px; line-height: 16px; color: #222; overflow: hidden; }
.note { height: 55px; white-space: nowrap; }
.note p { margin: 0; height: 16px; }
.lang { display: inline-block; width: 22px; height: 17px; margin: -2px 4px -2px 0; background: #111; color: #fff; border-radius: 6px; text-align: center; font: 700 12px/17px "Liberation Sans", sans-serif; vertical-align: middle; }
.cx { display: inline-block; transform: scaleX(.893); transform-origin: 0 50%; }
.ni { padding-left: 40px; position: relative; }
.ni::before { content: ""; position: absolute; left: 31px; top: 6px; width: 4px; height: 4px; background: #222; }
.note-ru { font-size: 13.800px; }
.note-ru .ni { font-size: 14px; }
.nh2 { padding-left: 25px; }
.strip { width: 38px; height: 359px; background: #969696; border: solid #222; border-width: 1px 1px 1px 0; color: #fff; font: 700 30px/28px "Liberation Sans", sans-serif; text-align: center; padding-top: 7px; }
.connectors { padding: 0 0 0 25px; }
.conn { display: flex; align-items: flex-end; height: 99px; }
.conn-2 { margin-top: 38px; }
.conn-1 { margin-top: 25px; }
.conn-name { writing-mode: vertical-rl; transform: rotate(180deg) scaleY(.83); width: 16px; font: 700 18.500px/16px "Liberation Sans", sans-serif; color: #1f1f1f; margin: 0 17px -6px 0; white-space: nowrap; }
.conn-body { display: grid; width: 176px; height: 99px; }
.conn-body > * { grid-area: 1 / 1; }
.conn-svg { width: 176px; height: 99px; display: block; }
.conn-labels { display: flex; justify-content: space-between; height: 20px; margin-top: -2px; font: 20px/18px "Liberation Sans", sans-serif; color: #222; }
.conn-labels span { display: block; transform: scaleX(.81); transform-origin: 0 50%; }
.conn-labels span + span { transform-origin: 100% 50%; }
.lab-in { margin-right: 2px; }
.pageno-right { position: absolute; left: 865px; top: 865px; font: 14px "Liberation Sans", sans-serif; color: #222; }

/* scrollbars */
.vscroll { width: 16px; flex: none; background: #f0f0f0; display: flex; flex-direction: column; align-items: center; padding: 7px 0 6px; height: 907px; }
.sb-arrow { width: 9px; height: 6px; flex: none; }
.vthumb { width: 15px; height: 26px; background: #cdcdcd; margin: 688px 0 auto -1px; }
.hscroll { height: 16px; flex: none; display: flex; border-bottom: 1px solid #fff; background: #f0f0f0; font: 11.300px/15px "Open Sans", sans-serif; color: #222; }
.pagesize { width: 113px; background: #e6e6e6; text-align: center; white-space: nowrap; }
.h-left { width: 78px; padding-left: 4px; display: flex; align-items: center; }
.h-right { width: 57px; display: flex; align-items: center; justify-content: flex-end; padding-right: 6px; }
.hscroll svg { width: 6px; height: 10px; }
.hthumb { width: 1519px; background: #c8c8c8; }
.h-corner { width: 17px; background: #fff; }

/* right rail */
.rail-right { width: 46px; flex: none; background: #4f4f4f; border-left: 1px solid #474747; display: flex; flex-direction: column; align-items: center; padding-top: 11px; }
.rr { width: 24px; height: 24px; flex: none; }
.rr-sep { width: 28px; height: 1px; background: #3a3a3a; margin-top: 11px; margin-bottom: 12px; }
.rr-list { display: flex; flex-direction: column; gap: 22px; }
.rr-sep-bottom { margin-top: auto; }
.rr-collapse { margin-bottom: 11px; }

/* taskbar */
.taskbar { height: 30px; flex: none; display: flex; align-items: center; color: #fff; background: linear-gradient(90deg, #191919 18%, #2a2320 25%, #4a3a2f 32%, #4b3e34 48%, #3b3029 62%, #1e1c1c 76%, #171717 100%); }
.tk-item { width: 36px; height: 30px; display: flex; align-items: center; justify-content: center; position: relative; flex: none; }
.tk-item svg { width: 18px; height: 18px; }
.tk-first { margin-left: 2.500px; }
.tk-first, .tk-on, .tk-active { width: 37px; }
.tk-on::after { content: ""; position: absolute; left: 4.500px; right: 4.500px; bottom: 0; height: 2px; background: #76b9ed; }
.tk-active { background: #4a4a4a; }
.tk-active::after { content: ""; position: absolute; left: 0; right: 0; bottom: 0; height: 2px; background: #76b9ed; }
.tray { margin-left: auto; display: flex; align-items: center; font: 11.500px "Open Sans", sans-serif; color: #eee; }
.net { width: 86px; font-size: 11px; line-height: 13px; }
.net-row { display: flex; justify-content: space-between; }
.tray-chev { width: 13px; height: 7px; margin-left: 8px; }
.tray-avira { width: 16px; height: 16px; margin-left: 9px; }
.tray-37 { margin-left: 9px; color: #ffd400; width: 12px; }
.tray-sound { width: 15px; height: 14px; margin-left: 11px; }
.tray-wifi { width: 13px; height: 12px; margin-left: 12px; }
.tray-lang { margin-left: 11px; width: 24px; }
.tray-time { margin-left: 11px; width: 30px; }
.tray-note { width: 16px; height: 16px; margin-left: 15px; margin-right: 25px; }
```
